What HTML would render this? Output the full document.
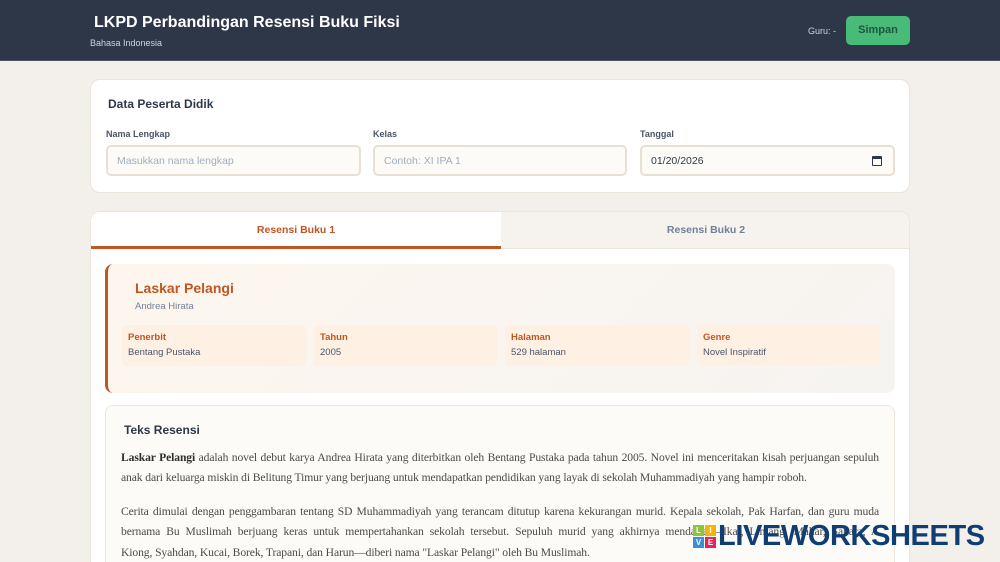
<!DOCTYPE html>
<html style="overflow:hidden;width:1000px;height:562px"><head><meta charset="utf-8"><style>
*{box-sizing:border-box;margin:0;padding:0}
body{width:1000px;height:562px;overflow:hidden;background:#f3efea;font-family:"Liberation Sans",sans-serif;position:relative}
.hdr{position:absolute;left:0;top:0;width:1000px;height:61px;background:#2d3748;border-bottom:1px solid #4a5568}
.t{position:absolute;left:94px;top:14px;color:#fff;font-weight:bold;font-size:16px}
.st{position:absolute;left:90px;top:38px;color:#cbd5e0;font-size:9px}
.guru{position:absolute;left:808px;top:26px;color:#cbd5e0;font-size:9px}
.btn{position:absolute;left:846px;top:16px;width:64px;height:29px;border-radius:5px;background:#48bb78;color:#22543d;font-weight:bold;font-size:11px;text-align:center;line-height:29px}
.card{position:absolute;background:#fff;border:1px solid #ebe5dc;border-radius:10px}
.h3{position:absolute;font-weight:bold;font-size:12px;color:#2d3748}
.lbl{position:absolute;top:129px;font-size:9px;color:#4a5568;font-weight:bold}
.inp{position:absolute;top:145px;height:31px;background:#fdfbf7;border:2px solid #e8e0d4;border-radius:5px;font-size:10.5px;color:#a0aec0;padding:8px 9px}
.tab{position:absolute;top:0;height:37px;line-height:36px;text-align:center;font-size:10.5px;font-weight:bold}
.info{position:absolute;top:325px;height:41px;background:#fef1e4;border-radius:3px;padding:7px 6px}
.info b{display:block;color:#c05621;font-size:9.5px}
.info span{display:block;color:#4a5568;font-size:9.5px;margin-top:4px}
.ln{position:absolute;left:121px;width:758px;font-family:"Liberation Serif",serif;font-size:11.6px;color:#4a4a4a;text-align:justify;text-align-last:justify;white-space:nowrap;letter-spacing:-0.1px}
.ln.e{text-align-last:left}
</style></head><body>
<div class="hdr">
<div class="t">LKPD Perbandingan Resensi Buku Fiksi</div>
<div class="st">Bahasa Indonesia</div>
<div class="guru">Guru: -</div>
<div class="btn">Simpan</div>
</div>
<div class="card" style="left:90px;top:79px;width:820px;height:114px"></div>
<div class="h3" style="left:108px;top:97px">Data Peserta Didik</div>
<div class="lbl" style="left:106px">Nama Lengkap</div>
<div class="lbl" style="left:373px">Kelas</div>
<div class="lbl" style="left:640px">Tanggal</div>
<div class="inp" style="left:106px;width:255px">Masukkan nama lengkap</div>
<div class="inp" style="left:373px;width:254px">Contoh: XI IPA 1</div>
<div class="inp" style="left:640px;width:255px;color:#2d3748">01/20/2026<span style="position:absolute;right:11px;top:9px;width:10px;height:10px;border:1.5px solid #2d3748;border-top-width:3px;border-radius:1px"></span></div>

<div class="card" style="left:90px;top:211px;width:820px;height:360px;overflow:hidden">
<div class="tab" style="left:0;width:410px;background:#fff;color:#c05621;border-bottom:3px solid #c05621">Resensi Buku 1</div>
<div class="tab" style="left:410px;width:410px;background:#f6f3ef;color:#718096;border-bottom:1px solid #ebe5dc">Resensi Buku 2</div>
</div>
<div style="position:absolute;left:105px;top:264px;width:790px;height:129px;border-radius:8px;border-left:3px solid #c05621;background:linear-gradient(135deg,#fdf6ef,#f6f4f1)"></div>
<div style="position:absolute;left:135px;top:280px;font-size:14px;font-weight:bold;color:#c05621">Laskar Pelangi</div>
<div style="position:absolute;left:135px;top:301px;font-size:9.5px;color:#718096">Andrea Hirata</div>
<div class="info" style="left:122px;width:184px"><b>Penerbit</b><span>Bentang Pustaka</span></div>
<div class="info" style="left:314px;width:183px"><b>Tahun</b><span>2005</span></div>
<div class="info" style="left:505px;width:184px"><b>Halaman</b><span>529 halaman</span></div>
<div class="info" style="left:697px;width:183px"><b>Genre</b><span>Novel Inspiratif</span></div>

<div style="position:absolute;left:105px;top:405px;width:790px;height:170px;border-radius:8px;background:#fdfbf7;border:1px solid #ece6dc"></div>
<div class="h3" style="left:124px;top:423px">Teks Resensi</div>
<div class="ln" style="top:451px"><b style="color:#2d2d2d">Laskar Pelangi</b> adalah novel debut karya Andrea Hirata yang diterbitkan oleh Bentang Pustaka pada tahun 2005. Novel ini menceritakan kisah perjuangan sepuluh</div>
<div class="ln e" style="top:471px">anak dari keluarga miskin di Belitung Timur yang berjuang untuk mendapatkan pendidikan yang layak di sekolah Muhammadiyah yang hampir roboh.</div>
<div class="ln" style="top:505px">Cerita dimulai dengan penggambaran tentang SD Muhammadiyah yang terancam ditutup karena kekurangan murid. Kepala sekolah, Pak Harfan, dan guru muda</div>
<div class="ln" style="top:525px">bernama Bu Muslimah berjuang keras untuk mempertahankan sekolah tersebut. Sepuluh murid yang akhirnya mendaftar—Ikal, Lintang, Mahar, Sahara, A</div>
<div class="ln e" style="top:546px">Kiong, Syahdan, Kucai, Borek, Trapani, dan Harun—diberi nama "Laskar Pelangi" oleh Bu Muslimah.</div>

<div style="position:absolute;left:693px;top:525px;width:24px;height:24px">
<div style="position:absolute;left:0;top:0;width:11px;height:11px;background:#8cc63f;color:#fff;font-size:8px;font-weight:bold;text-align:center;line-height:11px">L</div>
<div style="position:absolute;left:12px;top:0;width:11px;height:11px;background:#f7b500;color:#fff;font-size:8px;font-weight:bold;text-align:center;line-height:11px">I</div>
<div style="position:absolute;left:0;top:12px;width:11px;height:11px;background:#3b8fd9;color:#fff;font-size:8px;font-weight:bold;text-align:center;line-height:11px">V</div>
<div style="position:absolute;left:12px;top:12px;width:11px;height:11px;background:#e4245b;color:#fff;font-size:8px;font-weight:bold;text-align:center;line-height:11px">E</div>
</div>
<div style="position:absolute;left:718px;top:520px;font-size:29px;font-weight:bold;color:#0f3e73;letter-spacing:-0.4px">LIVEWORKSHEETS</div>
</body></html>
